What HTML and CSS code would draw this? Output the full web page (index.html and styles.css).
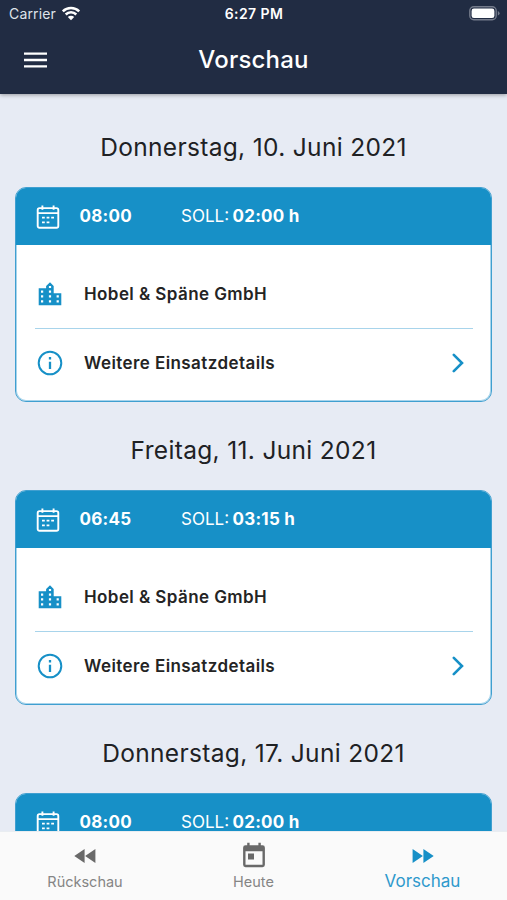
FILE: index.html
```
<!DOCTYPE html>
<html lang="de">
<head>
<meta charset="utf-8">
<title>Vorschau</title>
<link rel="stylesheet" href="styles.css">
</head>
<body>
<svg class="sprite" aria-hidden="true">
  <symbol id="calendar" viewBox="0 0 24 26">
    <rect x="1.7" y="4.1" width="20.6" height="19.7" rx="1.8" fill="none" stroke="currentColor" stroke-width="1.9"/>
    <path d="M2 9.100h20M6.400 1.600v4.200M17.600 1.600v4.200" fill="none" stroke="currentColor" stroke-width="1.9"/>
    <path d="M6 13.600h2.800M10.600 13.600h2.800M15.200 13.600h2.800M6 18.400h2.800M10.600 18.400h2.800" fill="none" stroke="currentColor" stroke-width="1.9"/>
  </symbol>
  <symbol id="city" viewBox="0 0 24 24">
    <path fill="currentColor" fill-rule="evenodd" d="M.7 6.200h7.400V4L12 .2 15.700 4v7.300h7.600v12H.7zM3 8.600v2.200h2.200V8.600zM3 13.300v2.200h2.200v-2.200zM3 18.200v2.200h2.200v-2.200zM10.900 3.900v2.200h2.200V3.900zM10.900 8.600v2.200h2.200V8.600zM10.900 13.300v2.200h2.200v-2.200zM10.900 18.200v2.200h2.200v-2.200zM18.600 13.300v2.200h2.200v-2.200zM18.600 18.200v2.200h2.200v-2.200z"/>
  </symbol>
  <symbol id="info" viewBox="0 0 26 26">
    <circle cx="13" cy="13" r="11.300" fill="none" stroke="currentColor" stroke-width="2"/>
    <path d="M13 11.800v7.300M13 7v2.400" fill="none" stroke="currentColor" stroke-width="2.300"/>
  </symbol>
  <symbol id="chevron" viewBox="0 0 12 20">
    <path d="M1.800 1.800 10 10l-8.200 8.200" fill="none" stroke="currentColor" stroke-width="2.600" stroke-linecap="round" stroke-linejoin="miter"/>
  </symbol>
</svg>

<header class="app-header">
  <div class="status-bar">
    <div class="carrier">
      <span>Carrier</span>
      <svg class="wifi" viewBox="0 0 20 15">
        <path d="M1.800 5.400a11.600 11.600 0 0 1 16.400 0M4.700 8.500a7.500 7.500 0 0 1 10.600 0" fill="none" stroke="#fff" stroke-width="2.500"/>
        <path d="M6.800 11.100a4.500 4.500 0 0 1 6.400 0L10 14.300z" fill="#fff"/>
      </svg>
    </div>
    <span class="clock">6:27 PM</span>
    <svg class="battery" viewBox="0 0 31 15">
      <rect x=".8" y=".8" width="26.400" height="13" rx="4" fill="none" stroke="#747b8b" stroke-width="1.400"/>
      <rect x="2.600" y="2.600" width="22.800" height="9.400" rx="2.300" fill="#fff"/>
      <path d="M28.800 5q1.800.7 1.800 2.300T28.800 9.600z" fill="#747b8b"/>
    </svg>
  </div>
  <div class="title-bar">
    <svg class="menu" viewBox="0 0 24 16"><path d="M0 1.600h23M0 8h23M0 14.300h23" stroke="#fff" stroke-width="2.300"/></svg>
    <h1>Vorschau</h1>
  </div>
</header>

<main>
  <section class="day">
    <h2>Donnerstag, 10. Juni 2021</h2>
    <article class="card">
      <div class="card-head">
        <svg class="ic-cal"><use href="#calendar"/></svg>
        <b class="time">08:00</b>
        <span class="soll">SOLL:</span><b class="hours">02:00 h</b>
      </div>
      <div class="card-body">
        <div class="row"><svg class="ic-city"><use href="#city"/></svg><span>Hobel &amp; Späne GmbH</span></div>
        <div class="row"><svg class="ic-info"><use href="#info"/></svg><span>Weitere Einsatzdetails</span><svg class="ic-chev"><use href="#chevron"/></svg></div>
      </div>
    </article>
  </section>
  <section class="day">
    <h2>Freitag, 11. Juni 2021</h2>
    <article class="card">
      <div class="card-head">
        <svg class="ic-cal"><use href="#calendar"/></svg>
        <b class="time">06:45</b>
        <span class="soll">SOLL:</span><b class="hours">03:15 h</b>
      </div>
      <div class="card-body">
        <div class="row"><svg class="ic-city"><use href="#city"/></svg><span>Hobel &amp; Späne GmbH</span></div>
        <div class="row"><svg class="ic-info"><use href="#info"/></svg><span>Weitere Einsatzdetails</span><svg class="ic-chev"><use href="#chevron"/></svg></div>
      </div>
    </article>
  </section>
  <section class="day">
    <h2>Donnerstag, 17. Juni 2021</h2>
    <article class="card">
      <div class="card-head">
        <svg class="ic-cal"><use href="#calendar"/></svg>
        <b class="time">08:00</b>
        <span class="soll">SOLL:</span><b class="hours">02:00 h</b>
      </div>
    </article>
  </section>
</main>

<nav class="tabs">
  <a class="tab">
    <svg class="ic-skip" viewBox="0 0 22 14"><path d="M10.600 0v14L.3 7zM21.400 0v14L11.100 7z" fill="currentColor"/></svg>
    <span>Rückschau</span>
  </a>
  <a class="tab">
    <svg class="ic-today" viewBox="0 0 24 26"><path fill="currentColor" fill-rule="evenodd" d="M5.200.8h2.400v2.500h8.800V.8h2.400v2.500h1.700a2.400 2.400 0 0 1 2.400 2.400v17.100a2.400 2.400 0 0 1-2.400 2.400h-17a2.400 2.400 0 0 1-2.400-2.400V5.700a2.400 2.400 0 0 1 2.400-2.400h1.700zM3.500 9.200v13.600h17V9.200zM6 11.600h6v6H6z"/></svg>
    <span>Heute</span>
  </a>
  <a class="tab active">
    <svg class="ic-skip" viewBox="0 0 22 14"><path d="M.6 0v14L10.900 7zM11.400 0v14L21.700 7z" fill="currentColor"/></svg>
    <span>Vorschau</span>
  </a>
</nav>
</body>
</html>
```
FILE: styles.css
```
* { box-sizing: border-box; }
body {
  margin: 0;
  height: 900px;
  overflow: hidden;
  display: flex;
  flex-direction: column;
  background: #e7ebf4;
  color: #202124;
  font-family: Inter, "Liberation Sans", sans-serif;
  white-space: nowrap;
}
svg { display: block; flex: none; }
.sprite { position: absolute; width: 0; height: 0; }

.app-header {
  flex: none;
  height: 94px;
  background: #212c43;
  color: #fff;
  box-shadow: 0 1px 4px rgba(0, 0, 0, .35);
  z-index: 1;
}
.status-bar {
  height: 27px;
  padding: 0 7px 0 9px;
  display: grid;
  grid-template-columns: 1fr auto 1fr;
  align-items: center;
}
.carrier { display: flex; align-items: center; gap: 5px; font-size: 14px; letter-spacing: .15px; color: #dfe3ea; }
.wifi { width: 20px; height: 15px; margin-top: -1px; }
.clock { margin-right: 1px; font-size: 14px; font-weight: 600; letter-spacing: .4px; }
.battery { width: 31px; height: 15px; justify-self: end; }
.title-bar {
  height: 66px;
  padding: 0 24px;
  display: grid;
  grid-template-columns: 1fr auto 1fr;
  align-items: center;
}
.menu { width: 24px; height: 16px; }
h1 { margin: -1px 0 0; font-size: 24px; font-weight: 500; letter-spacing: .2px; }

main { flex: 1; min-height: 0; overflow: hidden; padding: 5px 15px 0; }
.day { padding-top: 33px; }
h2 {
  margin: 0 0 25px;
  line-height: 30px;
  font-size: 24.5px;
  font-weight: 400;
  letter-spacing: .33px;
  text-align: center;
}
.card {
  height: 215px;
  background: #fff;
  border: 1px solid #409fd0;
  border-radius: 11px;
  overflow: hidden;
  box-shadow: inset 0 0 0 1px #a8d4eb;
}
.card-head {
  height: 57px;
  padding: 0 0 2px 19px;
  display: flex;
  align-items: center;
  background: #1790c7;
  color: #fff;
  font-size: 17px;
}
.ic-cal { width: 24px; height: 26px; margin: 2px 0 0 .5px; }
.time { width: 101px; margin-left: 20px; font-weight: 700; letter-spacing: .25px; }
.soll { width: 51.5px; margin-left: .5px; }
.hours { font-weight: 700; letter-spacing: .25px; }
.card-body { padding: 14px 18px 0 19px; color: #1790c7; }
.row { height: 69px; display: flex; align-items: center; }
.row + .row { height: 68px; border-top: 1px solid #a8d4eb; }
.row span { flex: 1; color: #242424; font-size: 17px; font-weight: 600; letter-spacing: .42px; }
.ic-city { width: 24px; height: 24px; margin: 0 22.5px 0 2.5px; }
.ic-info { width: 26px; height: 26px; margin: 0 21.5px 0 1.5px; }
.ic-chev { width: 12px; height: 20px; margin-right: 9px; }

.tabs {
  flex: none;
  height: 69px;
  display: grid;
  grid-template-columns: repeat(3, 1fr);
  background: #fafafa;
  border-top: 1px solid #e9edf1;
  color: #696969;
}
.tab { display: grid; grid-template-rows: 47px 20px; justify-items: center; align-items: center; }
.tab svg { align-self: center; }
.tab span { align-self: start; margin-top: -7px; line-height: 20px; font-size: 14.5px; color: #858585; }
.tab:first-child span { margin-left: 1px; }
.ic-skip { width: 22px; height: 14px; }
.ic-today { width: 24px; height: 26px; margin-top: -2px; }
.tab.active { color: #1790c7; }
.tab.active span { font-size: 17px; color: #2e99cc; margin-top: -8px; }
```
